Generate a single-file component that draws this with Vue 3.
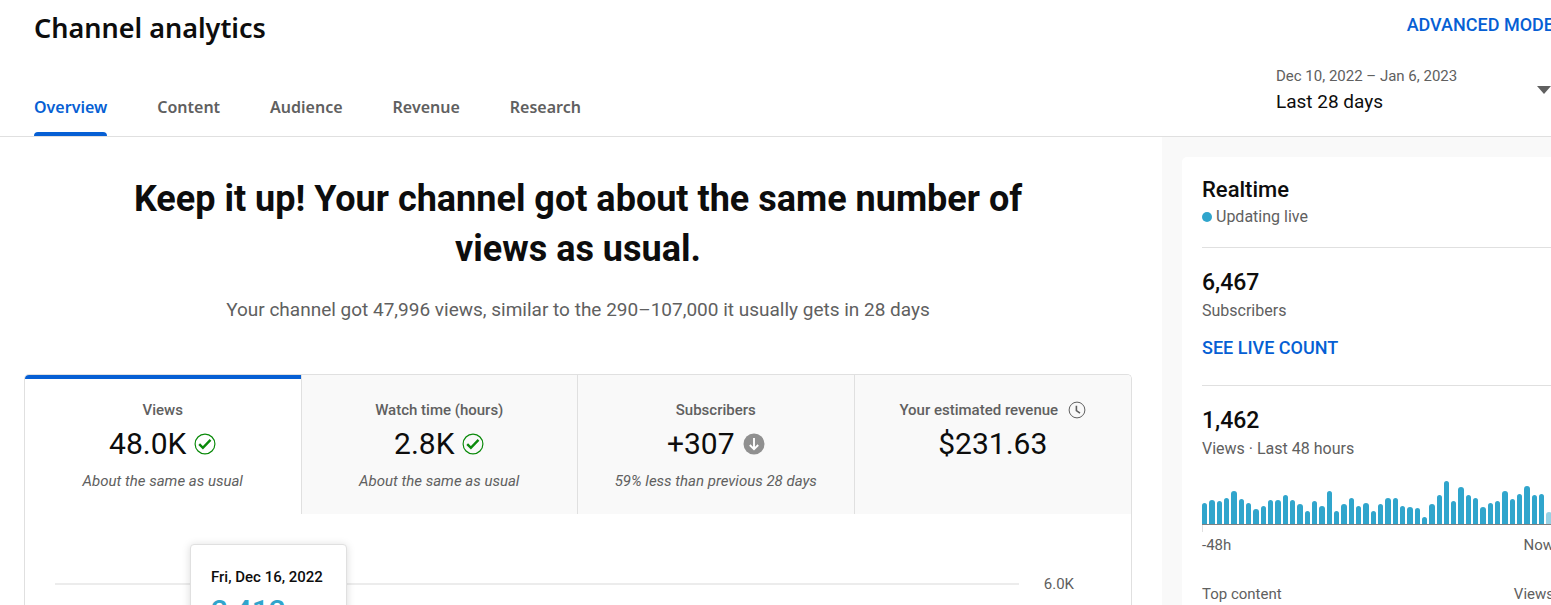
<script setup>
const tabs = ['Overview', 'Content', 'Audience', 'Revenue', 'Research']

const metrics = [
  { label: 'Views', value: '48.0K', trend: 'same', note: 'About the same as usual' },
  { label: 'Watch time (hours)', value: '2.8K', trend: 'same', note: 'About the same as usual' },
  { label: 'Subscribers', value: '+307', trend: 'down', note: '59% less than previous 28 days' },
  { label: 'Your estimated revenue', value: '$231.63', pending: true },
]

// Hourly views for the last 48 hours; the last hour is still in progress.
const hourly = [
  62, 69, 66, 77, 96, 73, 62, 43, 54, 69, 69, 85, 69, 58, 39, 66,
  54, 96, 39, 58, 77, 54, 62, 39, 58, 77, 77, 54, 50, 47, 20, 58,
  85, 126, 66, 107, 85, 77, 50, 62, 66, 96, 73, 89, 111, 85, 89, 36,
]
const peak = Math.max(...hourly)
</script>

<template>
  <div class="viewport">
    <div class="page">
      <header class="header">
        <div class="heading">
          <h1>Channel analytics</h1>
          <nav class="tabs" aria-label="Analytics sections">
            <a v-for="(tab, i) in tabs" :key="tab" href="#" class="tab" :class="{ active: i === 0 }">{{ tab }}</a>
          </nav>
        </div>
        <div class="controls">
          <button type="button" class="link-button advanced">ADVANCED MODE</button>
          <button type="button" class="period">
            <span class="period-text">
              <span class="period-range">Dec 10, 2022 – Jan 6, 2023</span>
              <span class="period-name">Last 28 days</span>
            </span>
            <svg class="caret" viewBox="0 0 14 8" aria-hidden="true"><path d="M0 0h14L7 8z" fill="#606060" /></svg>
          </button>
        </div>
      </header>

      <div class="body">
        <main class="main">
          <h2>Keep it up! Your channel got about the same number of views as usual.</h2>
          <p class="summary">Your channel got 47,996 views, similar to the 290–107,000 it usually gets in 28 days</p>

          <section class="metrics">
            <div class="metric-tabs">
              <button v-for="(m, i) in metrics" :key="m.label" type="button" class="metric" :class="{ selected: i === 0 }">
                <span class="metric-label">
                  {{ m.label }}
                  <svg v-if="m.pending" class="clock" viewBox="0 0 18 18" aria-hidden="true">
                    <circle cx="9" cy="9" r="7.9" fill="none" stroke="#606060" stroke-width="1" />
                    <path d="M8.4 4.8v4.8l3.6 2.6" fill="none" stroke="#606060" stroke-width="1.6" />
                  </svg>
                </span>
                <span class="metric-value">
                  {{ m.value }}
                  <svg v-if="m.trend === 'same'" class="trend" viewBox="0 0 22 22" aria-hidden="true">
                    <circle cx="11" cy="11" r="9.9" fill="none" stroke="#0b8a0b" stroke-width="1.2" />
                    <path d="M5.2 11.2l3.7 3.7 7.6-8" fill="none" stroke="#0b8a0b" stroke-width="2.4" />
                  </svg>
                  <svg v-if="m.trend === 'down'" class="trend" viewBox="0 0 22 22" aria-hidden="true">
                    <circle cx="11" cy="11" r="10.5" fill="#909090" />
                    <path d="M11 5v11M6.8 12l4.2 4.2 4.2-4.2" fill="none" stroke="#fff" stroke-width="1.9" />
                  </svg>
                </span>
                <span v-if="m.note" class="metric-note">{{ m.note }}</span>
              </button>
            </div>
            <div class="chart">
              <div class="gridline"></div>
              <span class="axis-label">6.0K</span>
              <div class="tooltip">
                <div class="tooltip-date">Fri, Dec 16, 2022</div>
                <div class="tooltip-value">2,412</div>
              </div>
            </div>
          </section>
        </main>

        <aside class="side">
          <div class="card">
            <section class="block">
              <h3>Realtime</h3>
              <p class="live"><span class="dot"></span>Updating live</p>
            </section>
            <section class="block">
              <div class="figure">6,467</div>
              <div class="caption">Subscribers</div>
              <button type="button" class="link-button live-count">SEE LIVE COUNT</button>
            </section>
            <section class="block">
              <div class="figure">1,462</div>
              <div class="caption">Views · Last 48 hours</div>
              <div class="bars">
                <span v-for="(v, i) in hourly" :key="i" class="bar" :style="{ height: (v / peak) * 100 + '%' }"></span>
              </div>
              <div class="tick"></div>
              <div class="row axis"><span>-48h</span><span>Now</span></div>
              <div class="row"><span>Top content</span><span>Views</span></div>
            </section>
          </div>
        </aside>
      </div>
    </div>
  </div>
</template>

<style>
body {
  margin: 0;
  overflow: hidden;
}
</style>

<style scoped>
* {
  box-sizing: border-box;
}
.viewport {
  height: 100vh;
  overflow: hidden;
  background: #fff;
  color: #0d0d0d;
  font-family: Roboto, sans-serif;
  font-size: 15px;
}
.page {
  margin-right: -23px;
  min-height: 100%;
  display: flex;
  flex-direction: column;
}
h1, h2, h3, p {
  margin: 0;
}
button {
  border: 0;
  padding: 0;
  background: none;
  color: inherit;
  font: inherit;
  cursor: pointer;
}
.header {
  display: flex;
  justify-content: space-between;
  border-bottom: 1px solid #e0e0e0;
}
.heading {
  padding: 8px 0 0 34px;
}
h1 {
  font-family: "Noto Sans", sans-serif;
  font-size: 27px;
  line-height: 40px;
  font-weight: 600;
}
.tabs {
  display: flex;
  gap: 50px;
  margin-top: 30px;
}
.tab {
  height: 58px;
  line-height: 58px;
  font-family: "Noto Sans", sans-serif;
  font-size: 16px;
  font-weight: 600;
  color: #606060;
  text-decoration: none;
}
.tab.active {
  position: relative;
  color: #065fd4;
}
.tab.active::after {
  content: "";
  position: absolute;
  left: 0;
  right: 0;
  bottom: 0;
  height: 4px;
  border-radius: 4px 4px 0 0;
  background: #065fd4;
}
.controls {
  display: flex;
  flex-direction: column;
  width: 298px;
  padding: 12px 20px 0 0;
}
.link-button {
  color: #065fd4;
  font-size: 18px;
  line-height: 26px;
  font-weight: 500;
}
.advanced {
  align-self: flex-end;
}
.period {
  display: flex;
  align-items: center;
  justify-content: space-between;
  margin-top: 26px;
  padding-right: 3px;
  text-align: left;
}
.period-text {
  display: flex;
  flex-direction: column;
}
.period-range {
  line-height: 24px;
  color: #606060;
}
.period-name {
  font-size: 19px;
  line-height: 28px;
}
.caret {
  width: 14px;
  height: 8px;
}
.body {
  flex: 1;
  display: flex;
}
.main {
  flex: 1;
  display: flex;
  flex-direction: column;
  padding: 37px 30px 0 24px;
  text-align: center;
}
h2 {
  align-self: center;
  max-width: 920px;
  font-size: 36px;
  line-height: 50px;
  font-weight: 700;
}
.summary {
  margin-top: 22px;
  font-size: 19px;
  line-height: 28px;
  color: #606060;
}
.metrics {
  flex: 1;
  margin-top: 50px;
  border: 1px solid #e0e0e0;
  border-bottom: 0;
  border-radius: 5px 5px 0 0;
  overflow: hidden;
}
.metric-tabs {
  display: grid;
  grid-template-columns: repeat(4, 1fr);
}
.metric {
  display: flex;
  flex-direction: column;
  align-items: center;
  height: 139px;
  padding-top: 22px;
  background: #f9f9f9;
  border-right: 1px solid #e0e0e0;
}
.metric:last-child {
  border-right: 0;
}
.metric.selected {
  background: #fff;
  box-shadow: inset 0 4px #065fd4;
}
.metric-label {
  display: flex;
  align-items: center;
  gap: 10px;
  line-height: 26px;
  font-weight: 500;
  color: #606060;
}
.clock {
  width: 18px;
  height: 18px;
}
.metric-value {
  display: flex;
  align-items: center;
  gap: 8px;
  font-size: 30px;
  line-height: 42px;
}
.trend {
  width: 22px;
  height: 22px;
}
.metric-note {
  margin-top: 4px;
  line-height: 24px;
  font-style: italic;
  color: #606060;
}
.chart {
  position: relative;
  display: flex;
  align-items: center;
  gap: 25px;
  padding: 58px 57px 0 30px;
}
.gridline {
  flex: 1;
  height: 2px;
  background: #ececec;
}
.axis-label {
  line-height: 24px;
  color: #606060;
}
.tooltip {
  position: absolute;
  left: 165px;
  top: 30px;
  min-width: 157px;
  padding: 20px;
  background: #fff;
  border: 1px solid #e0e0e0;
  border-radius: 4px;
  box-shadow: 0 1px 8px rgba(0, 0, 0, 0.15);
  text-align: left;
}
.tooltip-date {
  line-height: 24px;
  font-weight: 500;
}
.tooltip-value {
  margin-top: 4px;
  font-size: 30px;
  line-height: 36px;
  font-weight: 500;
  color: #30a5cc;
}
.side {
  width: 412px;
  padding: 20px 0 0 20px;
  background: #f9f9f9;
}
.card {
  height: 100%;
  padding: 0 20px;
  background: #fff;
  border-radius: 5px 0 0 0;
}
.block {
  padding: 19px 0 17px;
  border-bottom: 1px solid #e0e0e0;
}
.block:last-child {
  border-bottom: 0;
}
h3 {
  font-size: 22px;
  line-height: 28px;
  font-weight: 500;
}
.live {
  display: flex;
  align-items: center;
  gap: 4px;
  font-size: 16px;
  line-height: 26px;
  color: #606060;
}
.dot {
  width: 10px;
  height: 10px;
  border-radius: 50%;
  background: #30a5cc;
}
.figure {
  font-size: 23px;
  line-height: 32px;
  font-weight: 500;
}
.caption {
  font-size: 16px;
  line-height: 24px;
  color: #606060;
}
.live-count {
  display: block;
  margin: 12px 0 7px;
}
.bars {
  display: flex;
  align-items: flex-end;
  gap: 2px;
  height: 44px;
  margin-top: 20px;
  padding-right: 2px;
  border-bottom: 1px solid #808080;
}
.bar {
  flex: 1;
  border-radius: 3px 3px 0 0;
  background: #30a5cc;
}
.bar:last-child {
  opacity: 0.5;
}
.tick {
  width: 1px;
  height: 7px;
  background: #e0e0e0;
}
.row {
  display: flex;
  justify-content: space-between;
  line-height: 24px;
  color: #606060;
}
.axis {
  margin: 1px 0 25px;
}
</style>
